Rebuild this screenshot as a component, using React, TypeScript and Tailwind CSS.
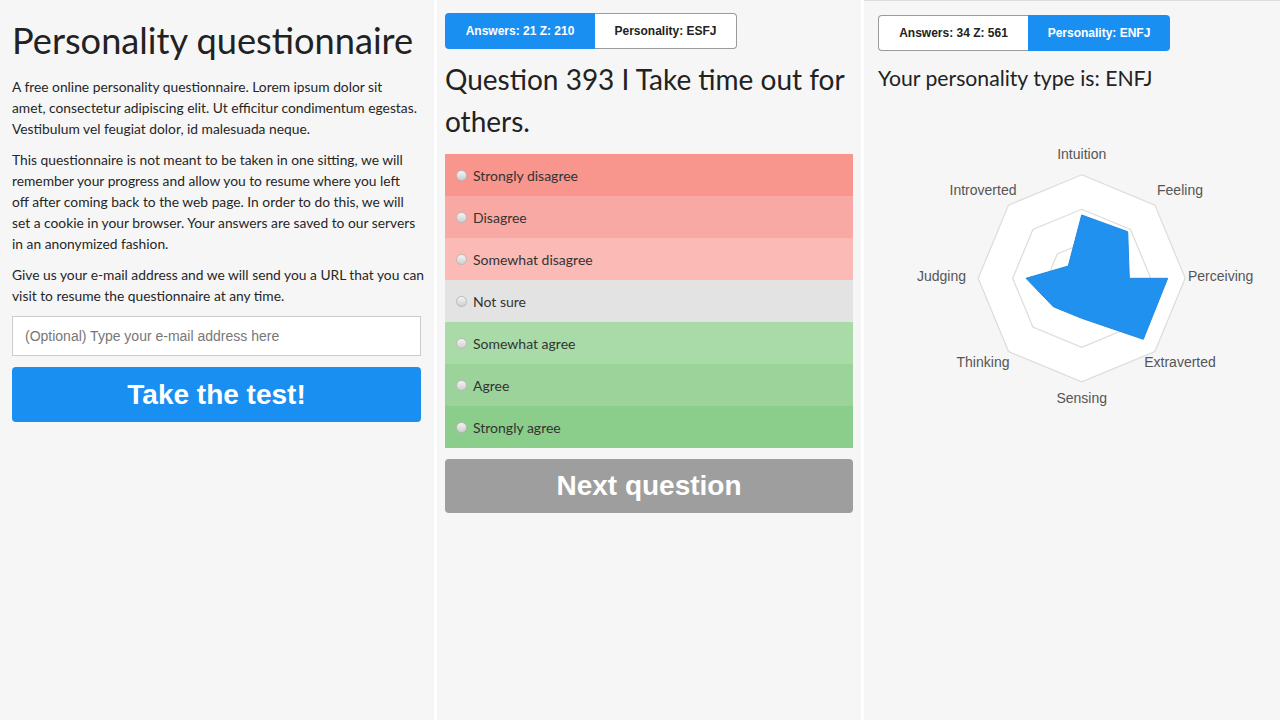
import React from "react";

const lato = { fontFamily: "Lato, 'Noto Sans', sans-serif" };

interface Option {
  label: string;
  bg: string;
}

const options: Option[] = [
  { label: "Strongly disagree", bg: "bg-[#f8958c]" },
  { label: "Disagree", bg: "bg-[#f9a9a3]" },
  { label: "Somewhat disagree", bg: "bg-[#fbbab6]" },
  { label: "Not sure", bg: "bg-[#e3e3e3]" },
  { label: "Somewhat agree", bg: "bg-[#a9dba9]" },
  { label: "Agree", bg: "bg-[#9bd39b]" },
  { label: "Strongly agree", bg: "bg-[#8bcd8b]" },
];

// radar: center and outer radius in page coordinates
const CX = 1081.7;
const CY = 278.3;
const R = 103.5;

function octagon(r: number) {
  const pts: string[] = [];
  for (let i = 0; i < 8; i++) {
    const a = (Math.PI / 4) * i - Math.PI / 2;
    pts.push(`${(CX + r * Math.cos(a)).toFixed(1)},${(CY + r * Math.sin(a)).toFixed(1)}`);
  }
  return pts.join(" ");
}

const labels = [
  { text: "Intuition", x: 1081.7, y: 155, anchor: "middle" },
  { text: "Feeling", x: 1180, y: 191, anchor: "middle" },
  { text: "Perceiving", x: 1188, y: 277, anchor: "start" },
  { text: "Extraverted", x: 1180, y: 363, anchor: "middle" },
  { text: "Sensing", x: 1081.7, y: 399, anchor: "middle" },
  { text: "Thinking", x: 983, y: 363, anchor: "middle" },
  { text: "Judging", x: 966, y: 277, anchor: "end" },
  { text: "Introverted", x: 983, y: 191, anchor: "middle" },
];

const dataShape =
  "1081.7,215 1127.7,231.7 1129.3,278.3 1167.7,278.3 1143.3,339.3 1081.7,318.3 1053.3,306.7 1026,278.3 1068.3,266";

// intro paragraphs, broken where the mobile page wraps them
const intro: string[][] = [
  [
    "A free online personality questionnaire. Lorem ipsum dolor sit",
    "amet, consectetur adipiscing elit. Ut efficitur condimentum egestas.",
    "Vestibulum vel feugiat dolor, id malesuada neque.",
  ],
  [
    "This questionnaire is not meant to be taken in one sitting, we will",
    "remember your progress and allow you to resume where you left",
    "off after coming back to the web page. In order to do this, we will",
    "set a cookie in your browser. Your answers are saved to our servers",
    "in an anonymized fashion.",
  ],
  [
    "Give us your e-mail address and we will send you a URL that you can",
    "visit to resume the questionnaire at any time.",
  ],
];

function Radio() {
  return (
    <span className="mr-[6px] inline-block h-[11px] w-[11px] shrink-0 rounded-full border border-[#b9b9b9] bg-gradient-to-b from-[#f4f4f4] to-[#cfcfcf]" />
  );
}

function Tabs({ left, right, active }: { left: string; right: string; active: 0 | 1 }) {
  return (
    <div
      className="flex h-[36px] w-[292px] text-[12px] font-bold"
      style={{ fontFamily: "'Liberation Sans', Arial, sans-serif" }}
    >
      <div
        className={`flex w-[150px] items-center justify-center rounded-l-[4px] ${
          active === 0 ? "bg-[#1a8ff2] text-white" : "border border-r-0 border-[#9a9a9a] bg-white text-[#222]"
        }`}
      >
        {left}
      </div>
      <div
        className={`flex flex-1 items-center justify-center rounded-r-[4px] ${
          active === 1 ? "bg-[#1a8ff2] text-white" : "border border-l-0 border-[#9a9a9a] bg-white text-[#222]"
        }`}
      >
        {right}
      </div>
    </div>
  );
}

export default function App() {
  return (
    <div className="flex h-[720px] w-[1280px] overflow-hidden bg-white text-[#262626]" style={lato}>
      {/* intro */}
      <div className="w-[434px] shrink-0 bg-[#f6f6f6] pl-[12px] pr-[12px] pt-[17px]">
        <h1 className="whitespace-nowrap text-[36.2px] leading-[46px] font-normal text-[#222]">
          Personality questionnaire
        </h1>
        <div className="mt-[13px] flex flex-col gap-[10px]">
          {intro.map((lines, i) => (
            <p key={i} className="whitespace-nowrap text-[13.8px] leading-[21px]">
              {lines.map((line, j) => (
                <span key={j} className="block">
                  {line}
                </span>
              ))}
            </p>
          ))}
        </div>
        <input
          className="mt-[10px] block h-[40px] w-[409px] border border-[#cccccc] bg-white px-[12px] text-[14px] placeholder:text-[#777]"
          style={{ fontFamily: "'Liberation Sans', Arial, sans-serif" }}
          placeholder="(Optional) Type your e-mail address here"
        />
        <button
          className="mt-[11px] flex h-[55px] w-[409px] items-center justify-center rounded-[4px] bg-[#1a8ff2] text-[28px] font-bold text-white"
          style={{ fontFamily: "'Liberation Sans', Arial, sans-serif" }}
        >
          Take the test!
        </button>
      </div>

      <div className="w-[3px] shrink-0 bg-white" />

      {/* question */}
      <div className="w-[424px] shrink-0 bg-[#f6f6f6] pl-[8px] pr-[8px] pt-[13px]">
        <Tabs left="Answers: 21 Z: 210" right="Personality: ESFJ" active={0} />
        <h2 className="mt-[9px] text-[28px] leading-[42px] font-normal text-[#222]">
          Question 393 I Take time out for others.
        </h2>
        <div className="mt-[12px] flex flex-col">
          {options.map((o) => (
            <label
              key={o.label}
              className={`flex h-[42px] items-center pl-[11px] text-[14px] text-[#333] ${o.bg}`}
            >
              <Radio />
              {o.label}
            </label>
          ))}
        </div>
        <button
          className="mt-[11px] flex h-[54px] w-full items-center justify-center rounded-[4px] bg-[#9e9e9e] text-[28px] font-bold text-white"
          style={{ fontFamily: "'Liberation Sans', Arial, sans-serif" }}
        >
          Next question
        </button>
      </div>

      <div className="w-[3px] shrink-0 bg-white" />

      {/* result */}
      <div className="flex-1 border-t border-[#dcdcdc] bg-[#f6f6f6] pl-[14px] pt-[14px]">
        <Tabs left="Answers: 34 Z: 561" right="Personality: ENFJ" active={1} />
        <div className="mt-[12px] text-[21.2px] leading-[30px] text-[#222]">Your personality type is: ENFJ</div>
        <svg
          className="-ml-[14px] mt-[37px] block"
          width={416}
          height={290}
          viewBox="864 130 416 290"
          style={{ fontFamily: "'Liberation Sans', Arial, sans-serif" }}
        >
          <polygon points={octagon(R)} fill="#ffffff" stroke="#dcdcdc" strokeWidth={1.2} />
          <polygon points={octagon((R * 2) / 3)} fill="none" stroke="#dcdcdc" strokeWidth={1.2} />
          <polygon points={octagon(R / 3)} fill="none" stroke="#dcdcdc" strokeWidth={1.2} />
          <polygon points={dataShape} fill="#2191ef" stroke="#1f88e0" strokeWidth={1} />
          {labels.map((l) => (
            <text
              key={l.text}
              x={l.x}
              y={l.y}
              fontSize={14}
              fill="#555"
              textAnchor={l.anchor as "middle" | "start" | "end"}
              dominantBaseline="middle"
            >
              {l.text}
            </text>
          ))}
        </svg>
      </div>
    </div>
  );
}
